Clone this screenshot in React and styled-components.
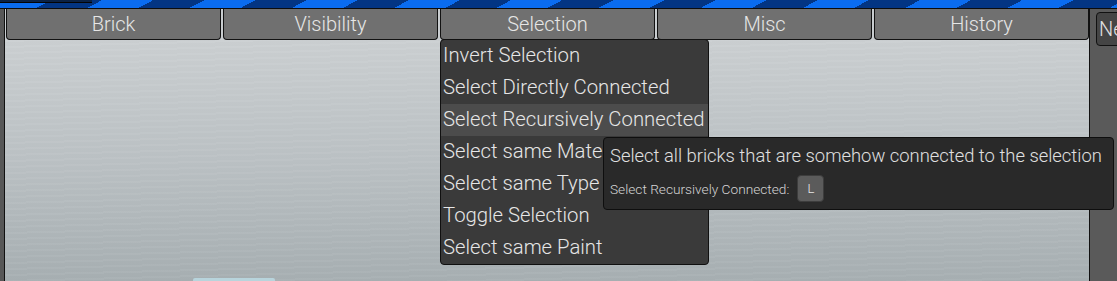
import styled, { createGlobalStyle } from "styled-components";

const GlobalStyle = createGlobalStyle`
  html, body {
    margin: 0;
    padding: 0;
    width: 1117px;
    height: 281px;
    overflow: hidden;
    background: #595959;
    font-family: Roboto, "Noto Sans", sans-serif;
  }
`;

const tabs = ["Brick", "Visibility", "Selection", "Misc", "History"];

const menuItems = [
  "Invert Selection",
  "Select Directly Connected",
  "Select Recursively Connected",
  "Select same Material",
  "Select same Type",
  "Toggle Selection",
  "Select same Paint",
];

export default function App() {
  return (
    <>
      <GlobalStyle />
      <Screen>
        <StripeBar>
          <CornerBox />
        </StripeBar>
        <Body>
          <LeftStrip />
          <Main>
            <TabBar>
              {tabs.map((t) => (
                <Tab key={t}>
                  {t}
                  {t === "Selection" && (
                    <Menu>
                      {menuItems.map((item, i) => (
                        <MenuItem key={item} $active={i === 2}>
                          {item}
                        </MenuItem>
                      ))}
                      <Tooltip>
                        <TipTitle>
                          Select all bricks that are somehow connected to the
                          selection
                        </TipTitle>
                        <TipShortcut>
                          Select Recursively Connected:
                          <Key>L</Key>
                        </TipShortcut>
                      </Tooltip>
                    </Menu>
                  )}
                </Tab>
              ))}
            </TabBar>
            <Viewport>
              <Glimpse />
            </Viewport>
          </Main>
          <RightPanel>
            <SideButton>Ne</SideButton>
          </RightPanel>
        </Body>
      </Screen>
    </>
  );
}

const Screen = styled.div`
  width: 1117px;
  height: 281px;
  display: flex;
  flex-direction: column;
  overflow: hidden;
`;

const StripeBar = styled.div`
  height: 8px;
  flex-shrink: 0;
  position: relative;
  background: repeating-linear-gradient(
    152deg,
    #0a6cf0 0 24px,
    #033583 24px 48px
  );
  border-bottom: 1px solid #0c0c0c;
`;

const CornerBox = styled.div`
  position: absolute;
  left: 0;
  top: 0;
  width: 92px;
  height: 2px;
  background: #0b2244;
  border-bottom: 1px solid #050505;
`;

const Body = styled.div`
  flex: 1;
  display: flex;
  min-height: 0;
`;

const LeftStrip = styled.div`
  width: 4px;
  background: #575757;
  border-right: 1px solid #111;
  flex-shrink: 0;
`;

const Main = styled.div`
  flex: 1;
  display: flex;
  flex-direction: column;
  min-width: 0;
`;

const TabBar = styled.div`
  display: flex;
  gap: 2px;
  padding-left: 1px;
  height: 31px;
  flex-shrink: 0;
  background: #c9cdd0;
  position: relative;
  z-index: 2;
`;

const Tab = styled.div`
  position: relative;
  width: 216px;
  box-sizing: border-box;
  background: #707070;
  border: 1.5px solid #121212;
  border-top: none;
  border-radius: 0 0 4px 4px;
  display: flex;
  align-items: center;
  justify-content: center;
  color: #e6e6e6;
  font-size: 20px;
  font-weight: 300;
`;

const Menu = styled.div`
  position: absolute;
  left: -1px;
  top: 100%;
  width: 269px;
  box-sizing: border-box;
  background: #3a3a3a;
  border: 1.5px solid #101010;
  border-radius: 4px;
  display: flex;
  flex-direction: column;
`;

const MenuItem = styled.div`
  height: 32px;
  display: flex;
  align-items: center;
  padding-left: 2px;
  padding-bottom: 2px;
  box-sizing: border-box;
  color: #e6e6e6;
  font-size: 20.3px;
  font-weight: 300;
  white-space: nowrap;
  overflow: hidden;
  background: ${(p) => (p.$active ? "#4c4c4c" : "transparent")};
`;

const Tooltip = styled.div`
  position: absolute;
  left: 162px;
  top: 97px;
  width: 511px;
  height: 73px;
  box-sizing: border-box;
  background: #292929;
  border: 1.5px solid #0e0e0e;
  border-radius: 4px;
  padding: 7px 0 0 6px;
  display: flex;
  flex-direction: column;
  gap: 8px;
`;

const TipTitle = styled.div`
  color: #e0e0e0;
  font-size: 18.4px;
  line-height: 22px;
  font-weight: 300;
  white-space: nowrap;
`;

const TipShortcut = styled.div`
  display: flex;
  align-items: center;
  gap: 8px;
  color: #d4d4d4;
  font-size: 13.7px;
  font-weight: 300;
  white-space: nowrap;
`;

const Key = styled.span`
  width: 27px;
  height: 27px;
  box-sizing: border-box;
  display: flex;
  align-items: center;
  justify-content: center;
  background: #5b5b5b;
  border: 1px solid #3d3d3d;
  border-radius: 4px;
  color: #e8e8e8;
  font-size: 13px;
`;

const Viewport = styled.div`
  flex: 1;
  position: relative;
  background:
    repeating-linear-gradient(
      178.5deg,
      rgba(255, 255, 255, 0.025) 0 2px,
      rgba(0, 0, 0, 0.012) 2px 6px
    ),
    linear-gradient(180deg, #ccd0d2 0%, #bcc2c5 50%, #a8b0b3 100%);
`;

const Glimpse = styled.div`
  position: absolute;
  left: 188px;
  bottom: 0;
  width: 82px;
  height: 3px;
  background: #b8d4dc;
  border-radius: 2px 2px 0 0;
`;

const RightPanel = styled.div`
  width: 27px;
  flex-shrink: 0;
  background: #5a5a5a;
  border-left: 1.5px solid #111;
  padding-top: 3px;
  overflow: hidden;
`;

const SideButton = styled.div`
  margin-left: 6px;
  width: 40px;
  height: 34px;
  box-sizing: border-box;
  background: #454545;
  border: 1.5px solid #111;
  border-radius: 4px;
  color: #e0e0e0;
  font-size: 20px;
  font-weight: 300;
  display: flex;
  align-items: center;
  padding-left: 2px;
`;
